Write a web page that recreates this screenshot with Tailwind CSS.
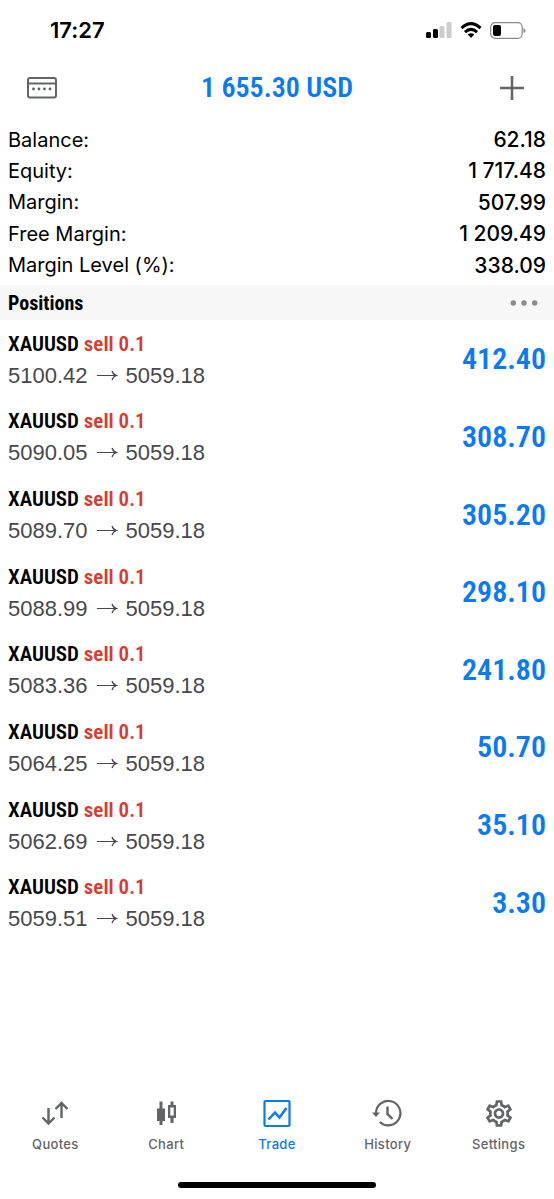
<!DOCTYPE html>
<html lang="en">
<head>
<meta charset="utf-8">
<meta name="viewport" content="width=device-width, initial-scale=1">
<title>Trade</title>
<script src="https://cdn.jsdelivr.net/npm/@tailwindcss/browser@4"></script>
</head>
<body class="flex min-h-screen flex-col bg-white font-['Inter','Liberation_Sans',sans-serif] text-black [font-feature-settings:'calt'_0]">
<div class="flex h-15 items-center justify-between pr-7 pl-[50px]">
  <time class="text-[22px] font-semibold">17:27</time>
  <div class="flex items-center gap-2">
    <svg class="h-4 w-[26px]" viewBox="0 0 26 16" aria-label="Signal"><rect x="0" y="10" width="5" height="6" rx="1.5"/><rect x="7" y="7" width="5" height="9" rx="1.5"/><rect x="13.5" y="4" width="5" height="12" rx="1.5" fill="#ccc"/><rect x="20.5" y="0" width="5" height="16" rx="1.5" fill="#ccc"/></svg>
    <svg class="h-4 w-[22px]" viewBox="0 0 22 16" aria-label="Wi-Fi"><g fill="none" stroke="#000" stroke-width="3"><path d="M1.5 6.2Q11-2.8 20.5 6.2"/><path d="M5 10.2Q11 4.6 17 10.2"/></g><path d="M7.7 12.6Q11 9.9 14.3 12.6L11 16Z"/></svg>
    <svg class="h-[17px] w-9" viewBox="0 0 36 17" aria-label="Battery"><rect x=".7" y=".7" width="31.5" height="15.6" rx="4.5" fill="none" stroke="#888" stroke-width="1.2"/><rect x="3" y="3" width="8" height="11" rx="2"/><path d="M33.5 6q2 .5 2 2.5t-2 2.5z" fill="#888"/></svg>
  </div>
</div>
<header class="flex h-14 items-center justify-between px-[26px]">
  <button class="text-[#636466]" aria-label="Accounts"><svg class="h-6 w-8" viewBox="0 0 32 24" fill="none" stroke="currentColor" stroke-width="2"><rect x="2" y="2" width="28" height="19.5" rx="2"/><path d="M2 7.5h28"/><g fill="currentColor" stroke="none"><circle cx="7.5" cy="13" r="1.4"/><circle cx="13" cy="13" r="1.4"/><circle cx="18.5" cy="13" r="1.4"/><circle cx="24" cy="13" r="1.4"/></g></svg></button>
  <h1 class="font-['Roboto_Condensed','Roboto',sans-serif] text-[28px] font-semibold text-[#0a7af0]">1 655.30 USD</h1>
  <button class="text-[#636466]" aria-label="New order"><svg class="h-8 w-8" viewBox="0 0 32 32" fill="none" stroke="currentColor" stroke-width="2.5"><path d="M16 4v24M4 16h24"/></svg></button>
</header>
<main class="grow">
  <dl class="mt-2 grid min-h-[157px] auto-rows-fr px-2 text-xl">
    <div class="flex items-center justify-between"><dt>Balance:</dt><dd class="text-[21px] font-medium">62.18</dd></div>
    <div class="flex items-center justify-between"><dt>Equity:</dt><dd class="text-[21px] font-medium">1 717.48</dd></div>
    <div class="flex items-center justify-between"><dt>Margin:</dt><dd class="text-[21px] font-medium">507.99</dd></div>
    <div class="flex items-center justify-between"><dt>Free Margin:</dt><dd class="text-[21px] font-medium">1 209.49</dd></div>
    <div class="flex items-center justify-between"><dt>Margin Level (%):</dt><dd class="text-[21px] font-medium">338.09</dd></div>
  </dl>
  <div class="mt-1 flex h-[35px] items-center justify-between bg-[#f7f7f7] px-2">
    <h2 class="font-['Roboto_Condensed','Roboto',sans-serif] text-xl font-bold">Positions</h2>
    <button class="px-2 text-[#8a8a8c]" aria-label="Position options"><svg class="h-4 w-7" viewBox="0 0 28 16" fill="currentColor"><circle cx="3.3" cy="8" r="2.7"/><circle cx="14" cy="8" r="2.7"/><circle cx="24.7" cy="8" r="2.7"/></svg></button>
  </div>
  <ul id="positions" class="grid min-h-[621px] auto-rows-fr px-2"></ul>
</main>
<template id="position">
  <li class="flex items-center justify-between">
    <div class="pt-[2px]">
      <p class="font-['Roboto_Condensed','Roboto',sans-serif] text-[21px] leading-8 font-semibold">XAUUSD <span class="text-[#d93a30]">sell 0.1</span></p>
      <p class="flex items-center gap-2 font-['Liberation_Sans',sans-serif] text-[22px] leading-8 text-[#48484c]"><span data-open></span><svg class="h-4 w-[22px]" viewBox="0 0 22 16" fill="none" stroke="currentColor" stroke-width="1.2" role="img" aria-label="to"><path d="M1 7.5h19.5M16 3q1 3.5 4.5 4.5-3.5 1-4.5 4.5"/></svg><span data-current></span></p>
    </div>
    <output class="font-['Roboto_Condensed','Roboto',sans-serif] text-[30px] font-semibold text-[#0a7af0]"></output>
  </li>
</template>
<nav class="grid h-[85px] grid-cols-5 text-[13px] font-medium tracking-wide text-[#636466]">
  <a href="#quotes" class="flex flex-col items-center gap-[6px]"><svg class="h-8 w-8" viewBox="0 0 32 32" fill="none" stroke="currentColor" stroke-width="2.4"><path d="M9.5 11v16M3.5 20.5l6 6 6-6M22.5 21V5M16.5 12l6-6 6 6"/></svg>Quotes</a>
  <a href="#chart" class="flex flex-col items-center gap-[6px]"><svg class="h-8 w-8" viewBox="0 0 32 32" fill="currentColor"><path d="M9.5 4.5h3v7H15v12.500h-2.5v4h-3v-4H7V11.500h2.500z"/><path fill-rule="evenodd" d="M20.500 4.500h3v3.500H26v13h-2.500v5h-3v-5H18V8h2.500zM20.300 10.500v8h3.400v-8z"/></svg>Chart</a>
  <a href="#trade" aria-current="page" class="flex flex-col items-center gap-[6px] text-[#0a7af0]"><svg class="h-8 w-8" viewBox="0 0 32 32" fill="none" stroke="currentColor" stroke-width="2.2"><rect x="3.5" y="4" width="25" height="25" rx="1"/><path d="M7.5 22.5l6.5-7 4.5 5 7-9.500" stroke-width="2.5"/></svg>Trade</a>
  <a href="#history" class="flex flex-col items-center gap-[6px]"><svg class="h-8 w-8" viewBox="0 0 32 32" fill="none" stroke="currentColor" stroke-width="2.2"><path d="M4 16.500A12.200 12.200 0 1 1 7.800 25"/><path d="M15.500 9.500V17l5 5" stroke-width="2.4"/><path d="M0 15.500h8l-4 4.500z" fill="currentColor" stroke="none"/></svg>History</a>
  <a href="#settings" class="flex flex-col items-center gap-[6px]"><svg class="h-8 w-8" viewBox="0 0 24 24" fill="currentColor"><path transform="translate(0 .4)" d="M19.430 12.980c.04-.32.07-.64.07-.98 0-.34-.03-.66-.07-.98l2.110-1.650c.19-.15.24-.42.12-.64l-2-3.460c-.09-.16-.26-.25-.44-.25-.06 0-.12.01-.17.03l-2.490 1c-.52-.4-1.080-.73-1.690-.98l-.38-2.650C14.460 2.180 14.250 2 14 2h-4c-.25 0-.46.18-.49.42l-.38 2.650c-.61.25-1.170.59-1.690.98l-2.490-1c-.06-.02-.12-.03-.18-.03-.17 0-.34.09-.43.25l-2 3.460c-.13.22-.07.49.12.64l2.110 1.650c-.04.32-.07.65-.07.98 0 .33.03.66.07.98l-2.110 1.650c-.19.15-.24.42-.12.64l2 3.460c.09.16.26.25.44.25.06 0 .12-.01.17-.03l2.490-1c.52.4 1.080.73 1.690.98l.38 2.650c.03.24.24.42.49.42h4c.25 0 .46-.18.49-.42l.38-2.650c.61-.25 1.170-.59 1.690-.98l2.490 1c.06.02.12.03.18.03.17 0 .34-.09.43-.25l2-3.460c.12-.22.07-.49-.12-.64l-2.110-1.650zm-1.980-1.710c.04.31.05.52.05.73 0 .21-.02.43-.05.73l-.14 1.130.89.7 1.080.84-.7 1.210-1.270-.51-1.040-.42-.9.680c-.43.32-.84.56-1.250.73l-1.060.43-.16 1.130-.2 1.350h-1.400l-.19-1.350-.16-1.130-1.060-.43c-.43-.18-.83-.41-1.230-.71l-.91-.7-1.060.43-1.270.51-.7-1.210 1.080-.84.89-.7-.14-1.130c-.03-.31-.05-.54-.05-.74s.02-.43.05-.73l.14-1.130-.89-.7-1.080-.84.7-1.210 1.270.51 1.040.42.9-.68c.43-.32.84-.56 1.250-.73l1.060-.43.16-1.130.2-1.350h1.390l.19 1.350.16 1.130 1.060.43c.43.18.83.41 1.230.71l.91.7 1.060-.43 1.270-.51.7 1.210-1.070.85-.89.7.14 1.130zM12 8c-2.210 0-4 1.790-4 4s1.790 4 4 4 4-1.790 4-4-1.790-4-4-4zm0 6c-1.100 0-2-.9-2-2s.9-2 2-2 2 .9 2 2-.9 2-2 2z"/></svg>Settings</a>
</nav>
<div class="flex h-[17px] justify-center"><div class="h-[6px] w-[198px] rounded-full bg-black"></div></div>
<script>
const positions = [['5100.42', '412.40'], ['5090.05', '308.70'], ['5089.70', '305.20'], ['5088.99', '298.10'], ['5083.36', '241.80'], ['5064.25', '50.70'], ['5062.69', '35.10'], ['5059.51', '3.30']];
const list = document.getElementById('positions');
for (const [open, profit] of positions) {
  const row = document.getElementById('position').content.cloneNode(true);
  row.querySelector('[data-open]').textContent = open;
  row.querySelector('[data-current]').textContent = '5059.18';
  row.querySelector('output').textContent = profit;
  list.append(row);
}
</script>
</body>
</html>
